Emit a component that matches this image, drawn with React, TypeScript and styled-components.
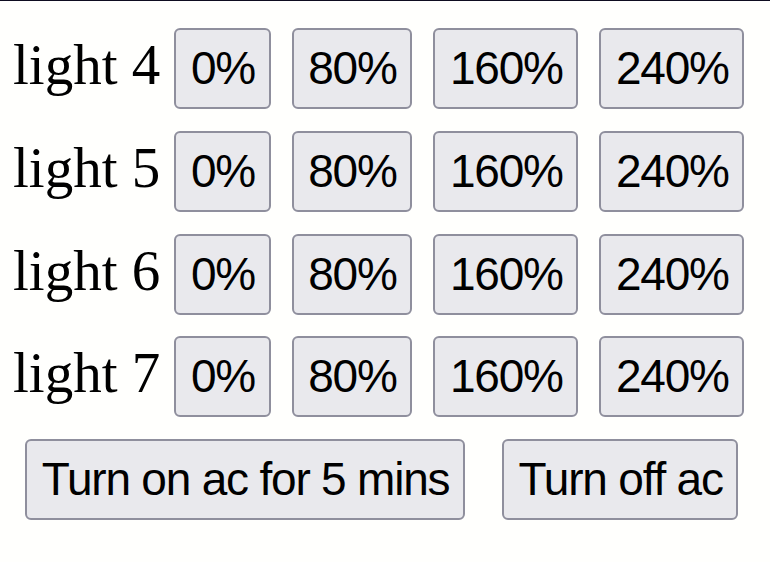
import React from "react";
import styled, { createGlobalStyle } from "styled-components";

const GlobalStyle = createGlobalStyle`
  html, body {
    margin: 0;
    padding: 0;
    background: #fffffd;
  }
  body {
    font-family: "Liberation Serif", "Times New Roman", serif;
    color: #000;
  }
`;

const Page = styled.div`
  border-top: 1px solid #0e0c20;
  padding: 27px 0 0 13px;
  display: flex;
  flex-direction: column;
  gap: 21.75px;
`;

const LightRow = styled.div`
  display: flex;
  align-items: baseline;
  gap: 14px;
`;

const Label = styled.span`
  font-family: "Liberation Serif", "Times New Roman", serif;
  font-size: 57px;
  line-height: normal;
  white-space: nowrap;
`;

const ButtonGroup = styled.div`
  display: flex;
  align-items: baseline;
  gap: 21px;
`;

const ActionRow = styled.div`
  display: flex;
  align-items: baseline;
  gap: 37px;
  padding-left: 12px;
`;

const Button = styled.button`
  font-family: "Liberation Sans", Arial, Helvetica, sans-serif;
  font-size: 46px;
  letter-spacing: -1.2px;
  line-height: 53px;
  color: #000;
  background: #e9e9ed;
  border: 2px solid #8f8f9d;
  border-radius: 6px;
  padding: 12px 13.5px 12px 14.7px;
  margin: 0;
  white-space: nowrap;
  cursor: pointer;
`;

const lights = [4, 5, 6, 7];
const levels = ["0%", "80%", "160%", "240%"];

export default function App() {
  return (
    <>
      <GlobalStyle />
      <Page>
        {lights.map((n) => (
          <LightRow key={n}>
            <Label>light {n}</Label>
            <ButtonGroup>
              {levels.map((l) => (
                <Button key={l}>{l}</Button>
              ))}
            </ButtonGroup>
          </LightRow>
        ))}
        <ActionRow>
          <Button>Turn on ac for 5 mins</Button>
          <Button>Turn off ac</Button>
        </ActionRow>
      </Page>
    </>
  );
}
